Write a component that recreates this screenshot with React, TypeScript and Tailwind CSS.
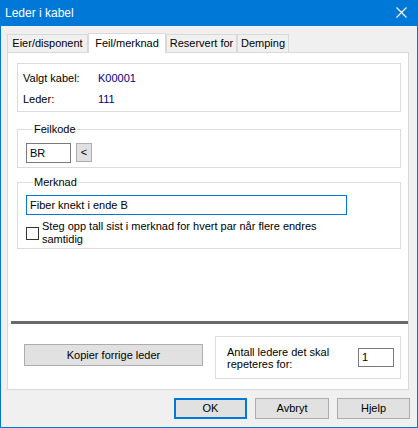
import React from "react";

const font = { fontFamily: '"Liberation Sans", Arial, sans-serif' };

function Tab({ label, w, selected }: { label: string; w: string; selected?: boolean }) {
  if (selected) {
    return (
      <div
        className={`${w} h-[20px] -mb-[1px] relative z-10 bg-white border border-b-0 border-[#d9d9d9] flex items-center justify-center text-[11px] text-black leading-[13px] pb-[1px]`}
      >
        {label}
      </div>
    );
  }
  return (
    <div
      className={`${w} h-[18px] bg-[#f0f0f0] border border-b-0 border-[#d9d9d9] flex items-center justify-center text-[11px] text-black leading-[13px]`}
    >
      {label}
    </div>
  );
}

function Btn({ label, w, def }: { label: string; w: string; def?: boolean }) {
  return (
    <div
      className={`${w} h-[21px] bg-[#e1e1e1] flex items-center justify-center text-[11px] text-black leading-[13px] ${
        def ? "border-2 border-[#0078d7]" : "border border-[#adadad]"
      }`}
    >
      {label}
    </div>
  );
}

export default function App() {
  return (
    <div
      style={font}
      className="w-[418px] h-[428px] bg-[#f0f0f0] border border-[#0078d7] flex flex-col overflow-hidden"
    >
      {/* Title bar */}
      <div className="h-[25px] shrink-0 bg-[#0078d7] flex items-center justify-between pl-[4px] pr-[10px]">
        <span className="text-white text-[12px] leading-[14px] -mt-[1px]">Leder i kabel</span>
        <svg width="11" height="11" viewBox="0 0 11 11" className="-mt-[2px]">
          <path d="M0.5 0.5 L10.5 10.5 M10.5 0.5 L0.5 10.5" stroke="white" strokeWidth="1.1" fill="none" />
        </svg>
      </div>

      {/* Tabs */}
      <div className="flex items-end ml-[6px] mt-[7px] h-[19px]">
        <Tab label="Eier/disponent" w="w-[81px]" />
        <Tab label="Feil/merknad" w="w-[78px]" selected />
        <Tab label="Reservert for" w="w-[71px]" />
        <Tab label="Demping" w="w-[52px]" />
      </div>

      {/* Panel */}
      <div className="ml-[6px] w-[402px] h-[338px] bg-white border border-[#d9d9d9] pl-[9px] flex flex-col text-[11px] text-black leading-[13px]">
        {/* Info box */}
        <div className="mt-[10px] w-[384px] h-[49px] border border-[#dcdcdc] pl-[5px] pt-[4px]">
          <div className="flex h-[20px] items-center">
            <span className="w-[75px]">Valgt kabel:</span>
            <span className="text-[#000080]">K00001</span>
          </div>
          <div className="flex h-[20px] items-center mt-[1px]">
            <span className="w-[75px]">Leder:</span>
            <span className="text-[#000080]">111</span>
          </div>
        </div>

        {/* Feilkode */}
        <fieldset className="mt-[11px] w-[384px] border border-[#dcdcdc] pl-[8px] pt-[7px] pb-[4px]">
          <legend className="ml-[7px] px-[1px] leading-[13px]">Feilkode</legend>
          <div className="flex items-start gap-[5px]">
            <div className="w-[45px] h-[20px] border border-[#7a7a7a] flex items-center pl-[3px]">BR</div>
            <div className="w-[16px] h-[19px] bg-[#e1e1e1] border border-[#adadad] flex items-center justify-center">
              &lt;
            </div>
          </div>
        </fieldset>

        {/* Merknad */}
        <fieldset className="mt-[8px] w-[384px] border border-[#dcdcdc] pl-[8px] pt-[6px] pb-[2px]">
          <legend className="ml-[7px] px-[1px] leading-[13px]">Merknad</legend>
          <div className="w-[321px] h-[20px] border border-[#0078d7] flex items-center pl-[3px]">
            Fiber knekt i ende B
          </div>
          <div className="mt-[5px] flex items-center h-[26px]">
            <div className="w-[13px] h-[13px] border border-[#333333] bg-white shrink-0" />
            <div className="ml-[3px] w-[290px] leading-[13px]">
              Steg opp tall sist i merknad for hvert par når flere endres samtidig
            </div>
          </div>
        </fieldset>

        {/* Separator */}
        <div className="mt-[72px] -ml-[6px] w-[397px] h-[3px] bg-[#696969]" />

        {/* Bottom row */}
        <div className="mt-[12px] flex items-start">
          <div className="ml-[7px] mt-[8px] w-[179px] h-[22px] bg-[#e1e1e1] border border-[#adadad] flex items-center justify-center">
            Kopier forrige leder
          </div>
          <div className="ml-[12px] w-[186px] h-[43px] border border-[#dcdcdc] flex items-center pl-[11px]">
            <div className="w-[120px] leading-[12px]">
              Antall ledere det skal
              <br />
              repeteres for:
            </div>
            <div className="ml-[11px] w-[36px] h-[19px] border border-[#7a7a7a] flex items-center pl-[3px]">1</div>
          </div>
        </div>
      </div>

      {/* Dialog buttons */}
      <div className="mt-[8px] flex justify-end pr-[7px] gap-[8px]">
        <Btn label="OK" w="w-[73px]" def />
        <Btn label="Avbryt" w="w-[74px]" />
        <Btn label="Hjelp" w="w-[73px]" />
      </div>
    </div>
  );
}
